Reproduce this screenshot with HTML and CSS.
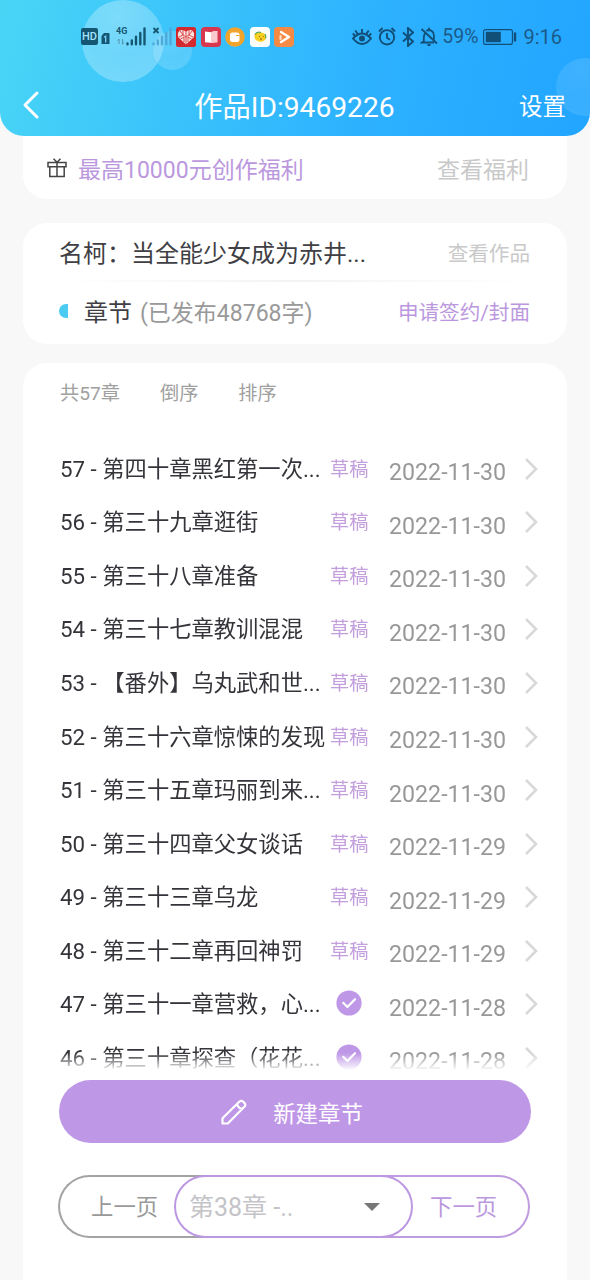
FILE: index.html
```html
<!DOCTYPE html>
<html lang="zh-CN">
<head>
  <meta charset="UTF-8">
  <title>作品ID:9469226</title>
  <meta name="viewport" content="width=device-width, initial-scale=1.0" />
  <link rel="stylesheet" href="styles.css">
</head>
<body>
  <svg class="defs" width="0" height="0">
    <symbol id="arrow" viewBox="0 0 14 24"><path d="M2 2l10 10L2 22" fill="none" stroke="#d8d8d8" stroke-width="2.6"/></symbol>
    <symbol id="check" viewBox="0 0 26 26"><circle cx="13" cy="13" r="12.6" fill="#bf97e7"/><path d="M7.2 12.8l4.2 4.2 7.6-7.8" fill="none" stroke="#fff" stroke-width="2.2" stroke-linecap="round" stroke-linejoin="round"/></symbol>
  </svg>

  <header class="header">
    <span class="bubble bubble-big"></span>
    <span class="bubble bubble-small"></span>
    <span class="bubble bubble-right"></span>

    <div class="status">
      <div class="status-left">
        <span class="hd">HD</span>
        <svg class="sim" width="9" height="12" viewBox="0 0 9 12"><path d="M3 0h4.500q1 0 1 1v10H.5V3z" fill="#155672"/><path d="M3 4.200l1.700-1V9.500" fill="none" stroke="#77d2fb" stroke-width="1.300"/></svg>
        <div class="net">
          <span>4G</span>
          <svg width="30" height="19" viewBox="0 0 30 19"><g stroke="#155672" stroke-width="2.400" stroke-linecap="round"><path d="M11.500 16.500v.8M15.800 13.500v3.800M20 9.800v7.500M24.300 6v11.300M28.500 1.500v15.800"/></g><path d="M3 12v5M1.500 13.500L3 12M6.500 12v5l1.600-1.500" fill="none" stroke="#5294ad" stroke-width="1"/></svg>
        </div>
        <svg class="nosim" width="20" height="19" viewBox="0 0 20 19"><path d="M1.500 1l5 5M6.500 1l-5 5" stroke="#155672" stroke-width="1.800"/><g stroke="#4eaada" stroke-width="2.400" stroke-linecap="round"><path d="M1.500 16.500v.8M5.800 13.500v3.800M10 9.800v7.500M14.300 6v11.300M18.500 1.500v15.800"/></g></svg>
        <svg class="app" viewBox="0 0 20 20"><rect width="20" height="20" rx="2.500" fill="#d3282e"/><path d="M10 17.500L2.500 10.500Q.8 6.500 3.500 3.800 7 1.500 10 5q3-3.500 6.500-1.200 2.700 2.700 1 6.700z" fill="#fbe3df"/><path d="M4 4l3 4-4 2M7 3v5l3 2 3-2V3M16 4l-3 4 4 2M4.500 12L8 10v5M15.500 12L12 10v5M10 5v13" fill="none" stroke="#d3282e" stroke-width=".8"/></svg>
        <svg class="app" viewBox="0 0 20 20"><rect width="20" height="20" rx="4" fill="#d8384f"/><path d="M4 4.500l6 .8 3.500-1.300v11.500L10 15.800l-6-.6z" fill="#fff"/><path d="M10 5.300L14 4h2.500v11.500L10 15.800z" fill="#f9c9cf"/></svg>
        <svg class="app" viewBox="0 0 20 20"><circle cx="10" cy="10" r="9.800" fill="#f2a32c"/><rect x="5" y="5.500" width="9.500" height="9.500" rx="2.500" fill="#fff"/><path d="M11 8.500h3.500" stroke="#f2a32c" stroke-width="1"/></svg>
        <svg class="app" viewBox="0 0 20 20"><rect width="20" height="20" rx="4" fill="#fdfdfb"/><path d="M4.500 9.500Q4 5.500 9 5.500q6-.5 6.800 3.500 1 4-3.300 5.500-3 1-5-.8-3-.7-3-4.200z" fill="#f7cf1f"/><path d="M5 7.500Q7 4 11 5.500M15 7q1.500 2 .5 4.500" fill="none" stroke="#51a65c" stroke-width="1.200"/><path d="M9 9.500h.8M12.800 9.500h.8M10 12h2" stroke="#84551a" stroke-width="1"/></svg>
        <svg class="app" viewBox="0 0 20 20"><rect width="20" height="20" rx="4" fill="#f58a45"/><path d="M7 5l8 5-8 5" fill="none" stroke="#fff" stroke-width="2.400" stroke-linecap="round" stroke-linejoin="round"/><path d="M6.500 9v3" stroke="#ffe0c8" stroke-width="2.200" stroke-linecap="round"/></svg>
      </div>
      <div class="status-right">
        <svg width="20" height="18" viewBox="0 0 20 18" fill="none" stroke="#114f78" stroke-width="1.900"><path d="M1 10.500q9-10 18 0-9 11-18 0zM10 1v4M3.300 2.500l2.200 3.300M16.700 2.500l-2.200 3.300M.8 5.500l2 2M19.200 5.500l-2 2"/><circle cx="10" cy="10.500" r="3" fill="#114f78" stroke="none"/></svg>
        <svg width="18" height="19" viewBox="0 0 18 19" fill="none" stroke="#114f78" stroke-width="1.900"><circle cx="9" cy="10.300" r="7.200"/><path d="M9 6v4.800l3 2M1 4.500L4.500 1M17 4.500L13.500 1"/></svg>
        <svg width="12" height="20" viewBox="0 0 12 20" fill="none" stroke="#114f78" stroke-width="1.900"><path d="M1 5.500l10 9L6 19V1l5 4.500-10 9"/></svg>
        <svg width="18" height="19" viewBox="0 0 18 19" fill="none" stroke="#114f78" stroke-width="1.800"><path d="M1.500 2L17 16.500M5 6.500q-1.200 1.500-1.200 4v3.700L2 15.500h12M6.500 4Q7.500 3 9 3q5 .5 5 6.500v3M9 3V.8M7.500 18h3"/></svg>
        <span class="percent">59%</span>
        <svg width="34" height="16" viewBox="0 0 34 16"><rect x=".6" y=".6" width="28.800" height="14.800" rx="2" fill="none" stroke="#114f78" stroke-width="1.100"/><rect x="2.800" y="2.800" width="15" height="10.400" fill="#114f78"/><path d="M32 3.500v9" stroke="#114f78" stroke-width="2.400"/></svg>
        <span class="time">9:16</span>
      </div>
    </div>

    <nav class="nav">
      <svg class="back" width="18" height="30" viewBox="0 0 18 30"><path d="M15 3L3 15l12 12" fill="none" stroke="#fff" stroke-width="3" stroke-linecap="round" stroke-linejoin="round"/></svg>
      <h1>作品ID:9469226</h1>
      <span class="setting">设置</span>
    </nav>
  </header>

  <main>
    <section class="card welfare">
      <svg width="20" height="20" viewBox="0 0 20 20" fill="none" stroke="#444" stroke-width="1.500"><path d="M1 4.500h18v4.300H1zM2.800 8.800v9.700h14.400V8.800M10 4.500v14M6.500.8L10 4.300 13.500.8"/></svg>
      <span class="purple">最高10000元创作福利</span>
      <span class="view">查看福利</span>
    </section>

    <section class="card book">
      <div class="book-row">
        <span class="book-name">名柯：当全能少女成为赤井...</span>
        <span class="view small">查看作品</span>
      </div>
      <div class="line"></div>
      <div class="book-row">
        <i class="dot"></i>
        <span class="label">章节</span>
        <span class="words">(已发布48768字)</span>
        <span class="sign">申请签约/封面</span>
      </div>
    </section>

    <section class="card chapters">
      <div class="tools"><span>共57章</span><span>倒序</span><span>排序</span></div>

      <ul class="list">
        <li><span class="name">57 - 第四十章黑红第一次...</span><span class="tag">草稿</span><span class="date">2022-11-30</span><svg class="arrow"><use href="#arrow"/></svg></li>
        <li><span class="name">56 - 第三十九章逛街</span><span class="tag">草稿</span><span class="date">2022-11-30</span><svg class="arrow"><use href="#arrow"/></svg></li>
        <li><span class="name">55 - 第三十八章准备</span><span class="tag">草稿</span><span class="date">2022-11-30</span><svg class="arrow"><use href="#arrow"/></svg></li>
        <li><span class="name">54 - 第三十七章教训混混</span><span class="tag">草稿</span><span class="date">2022-11-30</span><svg class="arrow"><use href="#arrow"/></svg></li>
        <li><span class="name">53 - 【番外】乌丸武和世...</span><span class="tag">草稿</span><span class="date">2022-11-30</span><svg class="arrow"><use href="#arrow"/></svg></li>
        <li><span class="name">52 - 第三十六章惊悚的发现</span><span class="tag">草稿</span><span class="date">2022-11-30</span><svg class="arrow"><use href="#arrow"/></svg></li>
        <li><span class="name">51 - 第三十五章玛丽到来...</span><span class="tag">草稿</span><span class="date">2022-11-30</span><svg class="arrow"><use href="#arrow"/></svg></li>
        <li><span class="name">50 - 第三十四章父女谈话</span><span class="tag">草稿</span><span class="date">2022-11-29</span><svg class="arrow"><use href="#arrow"/></svg></li>
        <li><span class="name">49 - 第三十三章乌龙</span><span class="tag">草稿</span><span class="date">2022-11-29</span><svg class="arrow"><use href="#arrow"/></svg></li>
        <li><span class="name">48 - 第三十二章再回神罚</span><span class="tag">草稿</span><span class="date">2022-11-29</span><svg class="arrow"><use href="#arrow"/></svg></li>
        <li><span class="name">47 - 第三十一章营救，心...</span><span class="tag"><svg class="check"><use href="#check"/></svg></span><span class="date">2022-11-28</span><svg class="arrow"><use href="#arrow"/></svg></li>
        <li><span class="name">46 - 第三十章探查（花花...</span><span class="tag"><svg class="check"><use href="#check"/></svg></span><span class="date">2022-11-28</span><svg class="arrow"><use href="#arrow"/></svg></li>
      </ul>

      <button class="create">
        <svg width="26" height="26" viewBox="0 0 26 26" fill="none" stroke="#fff" stroke-width="2.200" stroke-linejoin="round"><path d="M1.500 24.500v-5.200L18.500 2.500q1.800-1.400 3.500 0l1.600 1.600q1.400 1.700 0 3.400L6.800 24.500zM16 5q1 4.300 5.500 5"/></svg>
        <span>新建章节</span>
      </button>

      <div class="pager">
        <span class="prev">上一页</span>
        <span class="select">第38章 -..<i class="caret"></i></span>
        <span class="next">下一页</span>
      </div>
    </section>
  </main>
</body>
</html>
```
FILE: styles.css
```css
* {
  box-sizing: border-box;
}

body {
  margin: 0;
  height: 1280px;
  overflow: hidden;
  background: #f8f8f8;
  font-family: Roboto, "Noto Sans CJK SC", sans-serif;
  color: #3f3f45;
  white-space: nowrap;
}

svg {
  flex-shrink: 0;
}

.defs {
  position: absolute;
}

/* header */
.header {
  position: relative;
  z-index: 1;
  height: 136px;
  border-radius: 0 0 24px 24px;
  background: linear-gradient(103deg, #49d5f6 0%, #36befc 40%, #2cb0ff 65%, #22a5ff 100%);
  overflow: hidden;
}

.bubble {
  position: absolute;
  border-radius: 50%;
  background: radial-gradient(circle at 45% 20%, rgba(255,255,255,0.32), rgba(255,255,255,0.24) 50%, rgba(255,255,255,0.3));
}

.bubble-big {
  left: 82px;
  top: 0;
  width: 82px;
  height: 82px;
}

.bubble-small {
  left: 153px;
  top: 31px;
  width: 39px;
  height: 39px;
  opacity: 0.6;
}

.bubble-right {
  left: 556px;
  top: 58px;
  width: 58px;
  height: 58px;
  opacity: 0.4;
}

.status {
  position: relative;
  display: flex;
  justify-content: space-between;
  align-items: center;
  height: 73px;
  padding: 0 28px 0 81px;
}

.status-left,
.status-right {
  display: flex;
  align-items: center;
}

.hd {
  width: 17px;
  height: 17px;
  line-height: 17px;
  border-radius: 2px;
  background: #155672;
  color: #a5e2fb;
  font-size: 11px;
  font-weight: 500;
  text-align: center;
}

.sim {
  margin: 4px 6px 0 3px;
}

.net {
  position: relative;
  height: 19px;
}

.net span {
  position: absolute;
  left: 0;
  top: 0;
  color: #155672;
  font-size: 9px;
  font-weight: 700;
  line-height: 9px;
}

.nosim {
  margin: 0 4px 0 6px;
}

.app {
  width: 20px;
  height: 20px;
  margin-right: 4.6px;
}

.status-right {
  gap: 6px;
  color: #1c5a88;
}

.percent {
  margin: 0 -1px 0 -2px;
  font-size: 19.500px;
}

.time {
  font-size: 20px;
}

.nav {
  display: flex;
  align-items: center;
  justify-content: space-between;
  position: relative;
  height: 63px;
  padding: 0 24px 0 22px;
  color: #fff;
}

.nav h1 {
  margin: -1px 0 0 30px;
  font-size: 28.200px;
  font-weight: 400;
}

.setting {
  font-size: 23.500px;
}

/* cards */
.card {
  margin: 0 23px 24px;
  border-radius: 24px;
  background: #fff;
}

.welfare {
  display: flex;
  align-items: center;
  height: 63px;
  margin-top: 0;
  padding: 0 38px 0 24px;
  border-radius: 0 0 24px 24px;
  font-size: 23px;
}

.purple {
  margin-left: 11px;
  color: #bb98de;
}

.view {
  margin-left: auto;
  color: #c9c9c9;
}

.small {
  font-size: 20.600px;
}

.book {
  height: 121px;
  margin-bottom: 19px;
  padding: 0 37px 0 36px;
}

.book-row {
  display: flex;
  align-items: center;
  height: 57px;
}

.book-name,
.label {
  font-size: 24px;
}

.line {
  height: 2px;
  background: linear-gradient(90deg, #fff, #f3f3f3 50%, #fff);
}

.dot {
  width: 9px;
  height: 14px;
  border-radius: 9px 0 0 9px;
  background: #4ccbf2;
}

.label {
  margin-left: 16px;
}

.words {
  margin-left: 8px;
  font-size: 23px;
  color: #999;
}

.sign {
  margin-left: auto;
  font-size: 20.600px;
  color: #bb98de;
}

/* chapter list */
.chapters {
  height: 940px;
  margin-bottom: 0;
  padding: 0 36px;
}

.tools {
  display: flex;
  gap: 40px;
  height: 78px;
  padding: 2px 0 0 1px;
  line-height: 58px;
  font-size: 19.200px;
  color: #a0a0a0;
}

.list {
  height: 630px;
  margin: 0 -8px 9px 0;
  padding: 0;
  overflow: hidden;
  list-style: none;
  -webkit-mask-image: linear-gradient(#000 612px, transparent 630px);
  mask-image: linear-gradient(#000 612px, transparent 630px);
}

.list li {
  display: flex;
  align-items: center;
  height: 53.550px;
}

.name {
  width: 271px;
  padding: 0 0 2px 1px;
  font-size: 22.300px;
  color: #34343a;
}

.tag {
  display: flex;
  width: 58px;
  font-size: 19.200px;
  color: #c3a0dd;
}

.check {
  width: 26px;
  height: 26px;
  margin-left: 6px;
}

.date {
  width: 136px;
  padding: 9px 0 0 1px;
  font-size: 23.200px;
  color: #989898;
}

.arrow {
  width: 14px;
  height: 24px;
  margin-top: 2px;
}

.create {
  display: flex;
  align-items: center;
  justify-content: center;
  gap: 26px;
  width: 100%;
  height: 63px;
  padding: 0 6px 0 0;
  border: none;
  border-radius: 32px;
  background: #bf97e7;
  color: #fff;
  font-family: inherit;
  font-size: 22.400px;
}

/* pager */
.pager {
  display: flex;
  height: 63px;
  margin: 32px 0 0 -1px;
  line-height: 61px;
  font-size: 22.400px;
}

.prev,
.next {
  width: 150px;
  border: 2px solid #a3a3a3;
}

.prev {
  padding-left: 31px;
  border-right: none;
  border-radius: 32px 0 0 32px;
  color: #999;
}

.next {
  padding-left: 50px;
  border-color: #bf9bdf;
  border-left: none;
  border-radius: 0 32px 32px 0;
  color: #bb98de;
}

.select {
  z-index: 1;
  display: flex;
  justify-content: space-between;
  align-items: center;
  width: 239px;
  margin: 0 -33px 0 -34px;
  padding: 1px 31px 0 13px;
  border: 2px solid #bc98e2;
  border-radius: 32px;
  font-size: 25px;
  color: #c4c4c8;
}

.caret {
  border: 8px solid transparent;
  border-top-color: #777;
  border-bottom: none;
}
```
